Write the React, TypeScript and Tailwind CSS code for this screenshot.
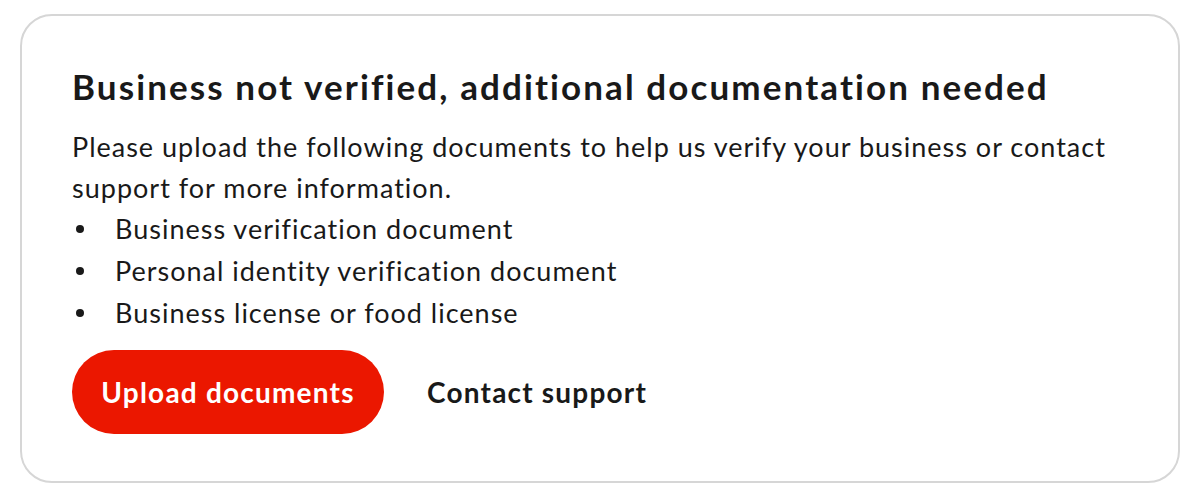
export default function App() {
  const docs = [
    "Business verification document",
    "Personal identity verification document",
    "Business license or food license",
  ];
  return (
    <div className="h-[497px] w-[1200px] bg-white px-[20px] pt-[14px] font-['Lato',sans-serif] text-[#191919]">
      <div className="h-[469px] rounded-[32px] border-2 border-[#d6d6d6] px-[50px] pt-[48px]">
        <h1 className="text-[35px] font-bold leading-[44px] tracking-[2.1px]">
          Business not verified, additional documentation needed
        </h1>
        <div className="text-[27px] tracking-[1px]">
          <p className="mt-[18px] leading-[41px]">
            Please upload the following documents to help us verify your business or contact support
            for more information.
          </p>
          <ul className="leading-[42px]">
            {docs.map((d) => (
              <li key={d} className="flex items-center">
                <span className="ml-[4px] mr-[31px] h-[8px] w-[8px] rounded-full bg-[#191919]" />
                {d}
              </li>
            ))}
          </ul>
        </div>
        <div className="mt-[16px] flex items-center gap-[43px]">
          <button className="h-[84px] w-[312px] rounded-full bg-[#eb1700] text-[28px] font-bold tracking-[1.2px] text-white">
            Upload documents
          </button>
          <button className="text-[28px] font-bold tracking-[1.2px]">Contact support</button>
        </div>
      </div>
    </div>
  );
}
